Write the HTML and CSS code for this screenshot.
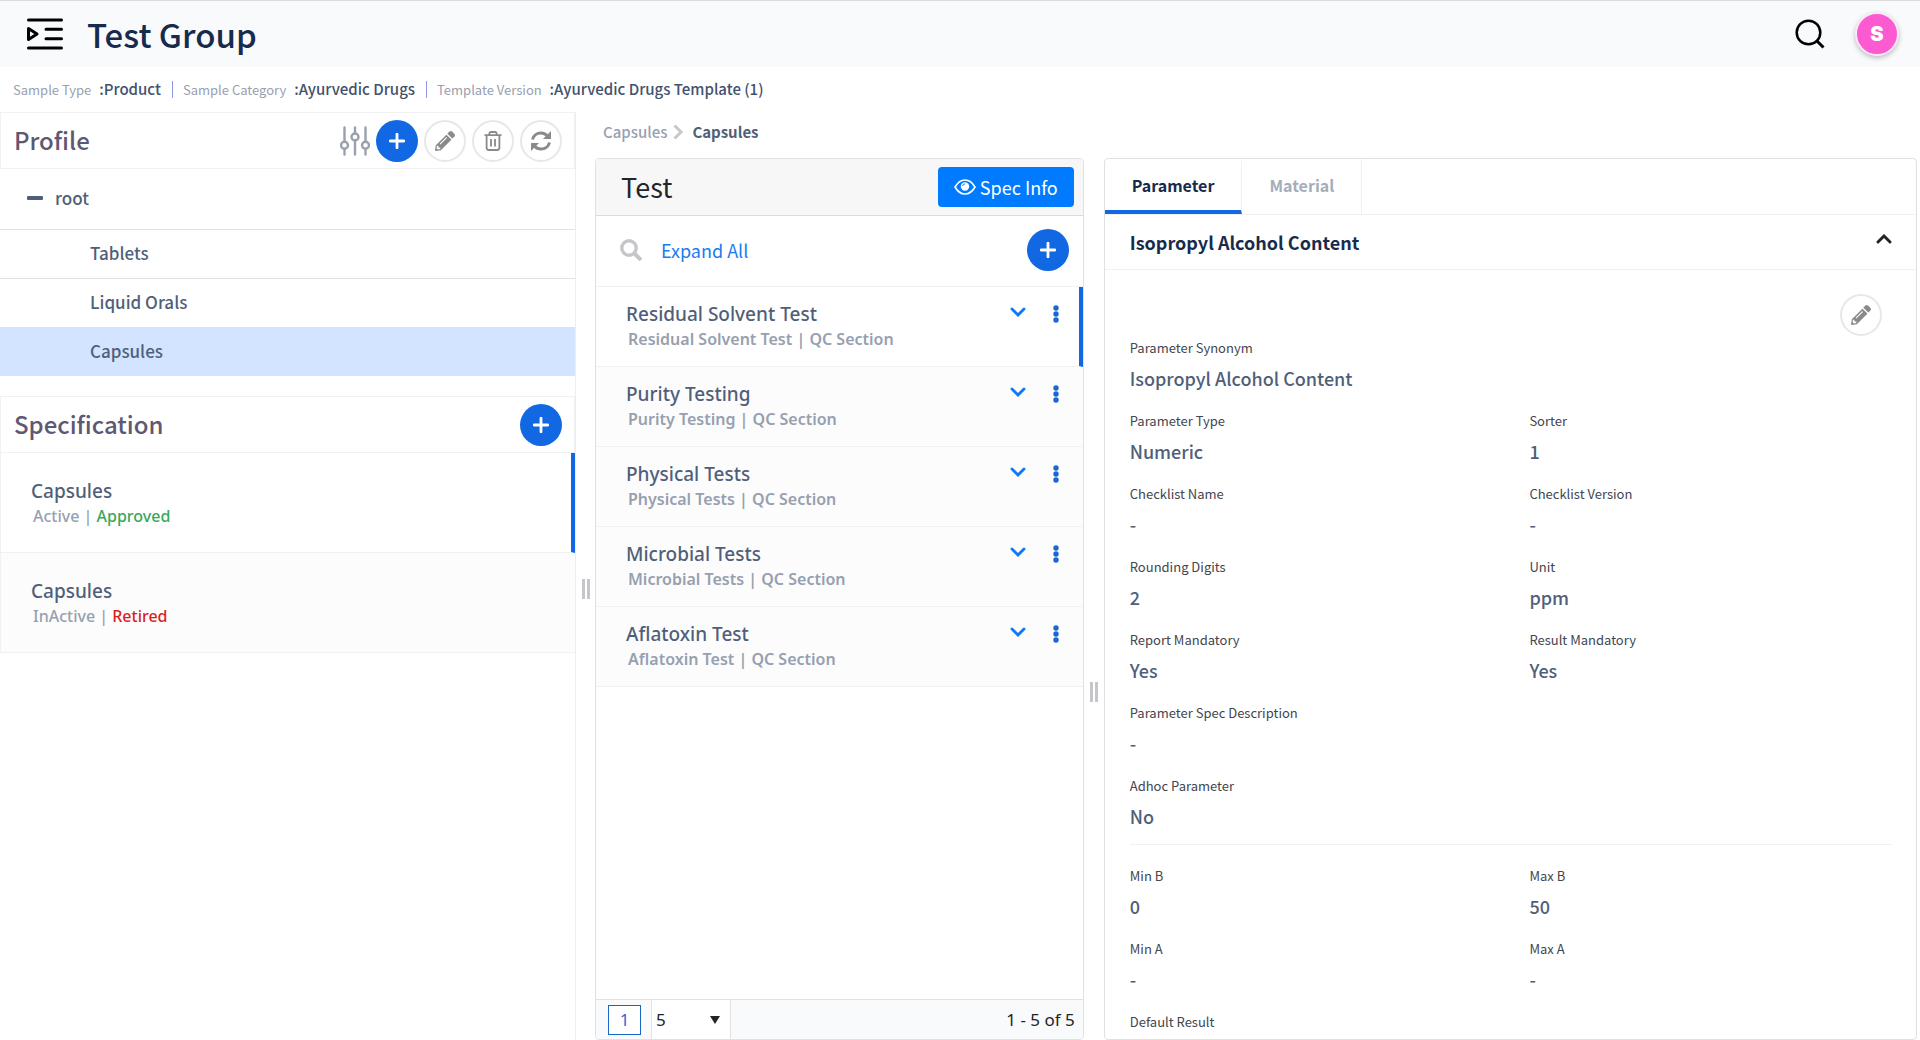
FILE: index.html
```html
<!DOCTYPE html>
<html lang="en">
<head>
<meta charset="utf-8">
<title>Test Group</title>
<link rel="stylesheet" href="styles.css">
</head>
<body>
<svg class="defs" aria-hidden="true">
  <symbol id="i-plus" viewBox="0 0 16 16"><path d="M8 1.200v13.600M1.200 8h13.600" stroke="currentColor" stroke-width="2.800" stroke-linecap="round"/></symbol>
  <symbol id="i-pencil" viewBox="0 0 512 512"><path fill="currentColor" d="M497.900 142.100l-46.100 46.100c-4.700 4.700-12.300 4.700-17 0l-111-111c-4.700-4.700-4.700-12.300 0-17l46.100-46.100c18.700-18.700 49.100-18.700 67.900 0l60.100 60.100c18.800 18.700 18.800 49.100 0 67.900zM284.200 99.800L21.600 362.400.4 483.900c-2.900 16.400 11.400 30.600 27.800 27.800l121.500-21.300 262.600-262.600c4.700-4.700 4.700-12.300 0-17l-111-111c-4.800-4.700-12.400-4.700-17.100 0zM124.100 339.900c-5.500-5.500-5.500-14.300 0-19.800l154-154c5.500-5.500 14.300-5.500 19.800 0s5.500 14.300 0 19.800l-154 154c-5.500 5.500-14.300 5.500-19.800 0zM88 424h48v36.300l-64.500 11.300-31.100-31.100L51.700 376H88v48z"/></symbol>
  <symbol id="i-down" viewBox="0 0 16 10"><path d="M2 2l6 6 6-6" fill="none" stroke="currentColor" stroke-width="2.900" stroke-linecap="round"/></symbol>
  <symbol id="i-dots" viewBox="0 0 6 18"><g fill="currentColor"><circle cx="3" cy="3" r="2.700"/><circle cx="3" cy="9" r="2.700"/><circle cx="3" cy="15" r="2.700"/></g></symbol>
</svg>

<header class="topbar">
  <button class="plain" aria-label="Open menu">
    <svg width="38" height="34" viewBox="0 0 38 34" fill="none" stroke="#000" stroke-width="3" stroke-linecap="round"><path d="M2.500 3h33M20 12.300h15.500M20 21.700h15.500M2.500 31h33"/><path d="M2.500 11.500v11l8.500-5.500z" stroke-linejoin="round"/></svg>
  </button>
  <h1 class="title">Test Group</h1>
  <button class="plain search" aria-label="Search">
    <svg width="30" height="30" viewBox="0 0 30 30" fill="none" stroke="#000" stroke-width="2.500"><circle cx="13.500" cy="13.500" r="11.800"/><path d="M21.500 21.500l7 7" stroke-width="3"/></svg>
  </button>
  <button class="avatar" aria-label="Account">S</button>
</header>

<div class="info">
  <span>Sample Type <b>:Product</b></span>
  <span>Sample Category <b>:Ayurvedic Drugs</b></span>
  <span>Template Version <b>:Ayurvedic Drugs Template (1)</b></span>
</div>

<main class="layout">
  <aside class="side">
    <div class="panel-head">
      <h2>Profile</h2>
      <button class="plain" aria-label="Filter">
        <svg width="30" height="30" viewBox="0 0 30 30" fill="none" stroke="#9aa0ad" stroke-width="2.400" stroke-linecap="round"><path d="M4.500 1.500v14M4.500 23v5.500M15 1.500v5M15 14v14.500M25.500 1.500v14M25.500 23v5.500"/><circle cx="4.500" cy="19.200" r="3.500"/><circle cx="15" cy="11" r="3.500"/><circle cx="25.500" cy="19.200" r="3.500"/></svg>
      </button>
      <button class="round primary" aria-label="Add profile"><svg width="16" height="16"><use href="#i-plus"/></svg></button>
      <button class="round" aria-label="Edit profile"><svg width="20" height="20"><use href="#i-pencil"/></svg></button>
      <button class="round" aria-label="Delete profile">
        <svg width="18" height="20" viewBox="0 0 18 20" fill="none" stroke="currentColor" stroke-width="1.800"><path d="M.5 4.200h17M5.300 4V2.600Q5.600 1 7 1h4q1.400 0 1.700 1.600V4M2.600 4.200v12.600q0 2.200 2.200 2.200h8.400q2.200 0 2.200-2.200V4.200M7 8v7.500M11 8v7.500"/></svg>
      </button>
      <button class="round" aria-label="Refresh profiles">
        <svg width="20" height="20" viewBox="0 0 20 20" fill="none" stroke="currentColor" stroke-width="3"><path d="M1.500 8.500C2.500 4.500 6 2 10 2c3 0 5 1.200 6.700 3.300M18.500 11.500c-1 4-4.500 6.500-8.500 6.500-3 0-5-1.200-6.700-3.300"/><path d="M20 0v8h-8zM0 20v-8h8z" fill="currentColor" stroke="none"/></svg>
      </button>
    </div>
    <ul class="tree">
      <li><button class="node root"><i class="minus"></i>root</button></li>
      <li><button class="node">Tablets</button></li>
      <li><button class="node">Liquid Orals</button></li>
      <li><button class="node selected">Capsules</button></li>
    </ul>
    <div class="panel-head">
      <h2>Specification</h2>
      <button class="round primary" aria-label="Add specification"><svg width="16" height="16"><use href="#i-plus"/></svg></button>
    </div>
    <ul class="specs">
      <li class="spec active"><a href="#">Capsules</a><p>Active | <span class="ok">Approved</span></p></li>
      <li class="spec"><a href="#">Capsules</a><p>InActive | <span class="bad">Retired</span></p></li>
    </ul>
  </aside>
  <div class="splitter first"><i></i></div>

  <section class="work">
    <nav class="crumbs" aria-label="Breadcrumb">
      <a href="#">Capsules</a>
      <svg width="11" height="16" viewBox="0 0 11 16" fill="none" stroke="#c6c8cc" stroke-width="3"><path d="M1.500 1.500L8 8l-6.500 6.500"/></svg>
      <b>Capsules</b>
    </nav>
    <div class="panes">
      <section class="card">
        <div class="card-head">
          <h2>Test</h2>
          <button class="spec-info">
            <svg width="22" height="16" viewBox="0 0 22 16" fill="none" stroke="#fff" stroke-width="1.600"><path d="M1 8Q5 1 11 1t10 7q-4 7-10 7T1 8z"/><circle cx="11" cy="7.500" r="4.200" fill="#fff" stroke="none"/><path d="M8.600 7q.2-2 2.400-2.200" stroke="#007bff" stroke-width="1"/></svg>
            Spec Info
          </button>
        </div>
        <div class="tools">
          <button class="plain" aria-label="Search tests"><svg width="22" height="22" viewBox="0 0 22 22" fill="none" stroke="#c5c6cc" stroke-width="3.400"><circle cx="9" cy="9" r="7.200"/><path d="M14 14l7 7" stroke-width="4"/></svg></button>
          <a href="#">Expand All</a>
          <button class="round primary" aria-label="Add test"><svg width="16" height="16"><use href="#i-plus"/></svg></button>
        </div>
        <ul class="tests">
          <li class="test active"><div><a href="#">Residual Solvent Test</a><p>Residual Solvent Test | QC Section</p></div><button class="plain" aria-label="Expand"><svg width="16" height="10"><use href="#i-down"/></svg></button><button class="plain" aria-label="More"><svg class="dots" width="6" height="18"><use href="#i-dots"/></svg></button></li>
          <li class="test"><div><a href="#">Purity Testing</a><p>Purity Testing | QC Section</p></div><button class="plain" aria-label="Expand"><svg width="16" height="10"><use href="#i-down"/></svg></button><button class="plain" aria-label="More"><svg class="dots" width="6" height="18"><use href="#i-dots"/></svg></button></li>
          <li class="test"><div><a href="#">Physical Tests</a><p>Physical Tests | QC Section</p></div><button class="plain" aria-label="Expand"><svg width="16" height="10"><use href="#i-down"/></svg></button><button class="plain" aria-label="More"><svg class="dots" width="6" height="18"><use href="#i-dots"/></svg></button></li>
          <li class="test"><div><a href="#">Microbial Tests</a><p>Microbial Tests | QC Section</p></div><button class="plain" aria-label="Expand"><svg width="16" height="10"><use href="#i-down"/></svg></button><button class="plain" aria-label="More"><svg class="dots" width="6" height="18"><use href="#i-dots"/></svg></button></li>
          <li class="test"><div><a href="#">Aflatoxin Test</a><p>Aflatoxin Test | QC Section</p></div><button class="plain" aria-label="Expand"><svg width="16" height="10"><use href="#i-down"/></svg></button><button class="plain" aria-label="More"><svg class="dots" width="6" height="18"><use href="#i-dots"/></svg></button></li>
        </ul>
        <div class="pager">
          <button class="page">1</button>
          <div class="size"><select aria-label="Rows per page"><option>5</option></select></div>
          <span>1 - 5 of 5</span>
        </div>
      </section>
      <div class="splitter second"><i></i></div>
      <section class="card detail">
        <div class="tabs" role="tablist">
          <button class="tab current" role="tab" aria-selected="true">Parameter</button>
          <button class="tab" role="tab" aria-selected="false">Material</button>
        </div>
        <div class="accordion">
          <h3>Isopropyl Alcohol Content</h3>
          <button class="plain" aria-label="Collapse"><svg class="up" width="16" height="10"><use href="#i-down"/></svg></button>
        </div>
        <div class="body">
          <button class="round edit" aria-label="Edit parameter"><svg width="20" height="20"><use href="#i-pencil"/></svg></button>
          <dl class="fields">
            <div class="wide"><dt>Parameter Synonym</dt><dd>Isopropyl Alcohol Content</dd></div>
            <div><dt>Parameter Type</dt><dd>Numeric</dd></div>
            <div><dt>Sorter</dt><dd>1</dd></div>
            <div><dt>Checklist Name</dt><dd>-</dd></div>
            <div><dt>Checklist Version</dt><dd>-</dd></div>
            <div><dt>Rounding Digits</dt><dd>2</dd></div>
            <div><dt>Unit</dt><dd>ppm</dd></div>
            <div><dt>Report Mandatory</dt><dd>Yes</dd></div>
            <div><dt>Result Mandatory</dt><dd>Yes</dd></div>
            <div class="wide"><dt>Parameter Spec Description</dt><dd>-</dd></div>
            <div class="wide"><dt>Adhoc Parameter</dt><dd>No</dd></div>
          </dl>
          <dl class="fields limits">
            <div><dt>Min B</dt><dd>0</dd></div>
            <div><dt>Max B</dt><dd>50</dd></div>
            <div><dt>Min A</dt><dd>-</dd></div>
            <div><dt>Max A</dt><dd>-</dd></div>
            <div class="wide"><dt>Default Result</dt></div>
          </dl>
        </div>
      </section>
    </div>
  </section>
</main>
</body>
</html>
```
FILE: styles.css
```css
* { box-sizing: border-box; margin: 0; padding: 0; }

body {
  display: flex;
  flex-direction: column;
  height: 100vh;
  overflow: hidden;
  background: #fff;
  color: #505f79;
  font-family: "Noto Sans CJK SC", "Noto Sans", sans-serif;
  font-size: 17px;
  line-height: 24px;
}

ul { list-style: none; }
a { color: inherit; text-decoration: none; }
button, select { font: inherit; color: inherit; cursor: pointer; }
svg { display: block; }
.defs { position: absolute; width: 0; height: 0; }
.plain { border: 0; background: none; }

/* Top bar */
.topbar {
  display: flex;
  flex: none;
  align-items: center;
  height: 67px;
  padding: 0 21px 1px 26px;
  border-top: 1px solid #d9dbdf;
  background: #f9fafc;
}
.title {
  margin-left: 23px;
  color: #172b4d;
  font-size: 33px;
  font-weight: 500;
  line-height: 48px;
}
.search { margin-left: auto; }
.avatar {
  width: 44px;
  height: 44px;
  margin-left: 30px;
  border: 2px solid #fbe9f8;
  border-radius: 50%;
  background: #fc5ad0;
  box-shadow: 0 2px 5px rgba(0, 0, 0, 0.25);
  color: #fff;
  font: 900 20px Inter, sans-serif;
}

/* Current selection summary */
.info {
  display: flex;
  flex: none;
  align-items: center;
  height: 45px;
  padding: 0 13px;
  color: #97a0af;
  font-size: 13px;
  line-height: 16px;
}
.info span + span {
  margin-left: 11px;
  padding-left: 10px;
  border-left: 1px solid #8f95e0;
}
.info b { margin-left: 5px; color: #42526e; font-size: 15px; font-weight: 500; }

/* Columns */
.layout { display: flex; flex: 1; min-height: 0; }
.side { flex: none; width: 30%; border-right: 1px solid #eceef0; }
.splitter {
  display: flex;
  flex: none;
  justify-content: center;
  width: 20px;
}
.splitter i {
  width: 8px;
  height: 20px;
  border: solid #c4c6cc;
  border-width: 0 3px;
}
.splitter.first { align-items: center; width: 19px; padding-top: 26px; }
.splitter.second { padding-top: 524px; }

.round {
  display: flex;
  flex: none;
  align-items: center;
  justify-content: center;
  width: 42px;
  height: 42px;
  border: 2px solid #e6e7e9;
  border-radius: 50%;
  background: #fff;
  color: #8a8a8a;
}
.primary { border: 0; background: #1268e3; color: #fff; }

/* Left column */
.panel-head {
  display: flex;
  align-items: center;
  gap: 6px;
  height: 57px;
  padding: 0 12px 0 13px;
  border: 1px solid #eff1f3;
}
.panel-head h2 {
  margin-right: auto;
  padding-bottom: 2px;
  color: #5e5873;
  font-size: 24px;
  font-weight: 500;
  line-height: 32px;
}
.tree { margin-bottom: 20px; }
.tree li + li { border-top: 1px solid #e0e3e6; }
.node {
  display: flex;
  align-items: center;
  width: 100%;
  height: 48px;
  padding: 0 0 2px 90px;
  border: 0;
  background: #fff;
  font-weight: 500;
}
.root { gap: 12px; height: 60px; padding-left: 27px; }
.minus { width: 16px; height: 4px; border-radius: 1px; background: #505f79; }
.selected { background: #d2e4ff; }

.spec, .test { font-family: "Noto Sans", sans-serif; font-weight: 500; }
.spec {
  height: 100px;
  padding: 26px 30px;
  border: solid #eff1f3;
  border-width: 0 0 1px 1px;
  background: #fcfcfd;
}
.spec a, .test a { font-size: 19px; line-height: 24px; }
.spec p, .test p {
  padding-left: 2px;
  color: #97a0af;
  font-size: 16px;
  font-weight: 600;
  line-height: 24px;
}
.spec p { font-weight: 500; }
.spec.active { border-right: 4px solid #1268e3; background: #fff; }
.ok { color: #36a95b; }
.bad { color: #de1e1e; }

/* Right side */
.work { display: flex; flex: 1; flex-direction: column; min-width: 0; padding-right: 3px; }
.crumbs {
  display: flex;
  flex: none;
  align-items: center;
  gap: 8px;
  height: 46px;
  padding: 0 8px 6px;
  font-size: 15px;
}
.crumbs a { color: #97a0af; font-weight: 500; }
.crumbs svg { margin-left: -2px; }
.panes { display: flex; flex: 1; min-height: 0; }
.card {
  display: flex;
  flex: 3 1 0;
  flex-direction: column;
  min-width: 0;
  overflow: hidden;
  border: 1px solid #dfe1e4;
  border-radius: 4px;
}
.detail { flex-grow: 5; }

.card-head {
  display: flex;
  flex: none;
  align-items: center;
  justify-content: space-between;
  height: 57px;
  padding: 0 9px 0 25px;
  border-bottom: 1px solid #d9dbde;
  background: #f7f7f7;
}
.card-head h2 { color: #212529; font-size: 27px; font-weight: 400; line-height: 40px; }
.spec-info {
  display: flex;
  align-items: center;
  gap: 4px;
  height: 40px;
  padding: 0 16px;
  border: 0;
  border-radius: 4px;
  background: #007bff;
  color: #fff;
  font-size: 18px;
}
.tools {
  display: flex;
  flex: none;
  align-items: center;
  gap: 19px;
  height: 71px;
  padding: 0 14px 3px 24px;
  border-bottom: 1px solid #eff1f3;
}
.tools a { margin-right: auto; color: #1a7cf0; font-size: 18px; }
.test {
  display: flex;
  align-items: flex-start;
  height: 80px;
  padding: 15px 24px 0 30px;
  border-bottom: 1px solid #eff1f3;
  background: #fcfcfd;
}
.test div { margin-right: auto; }
.test .plain { margin-left: 27px; padding-top: 5px; color: #0f7bf0; }
.test .plain + .plain { padding-top: 3px; }
.test .dots { color: #1a66d6; }
.test.active { padding-right: 20px; border-right: 4px solid #1268e3; background: #fff; }

.pager {
  display: flex;
  flex: none;
  align-items: center;
  height: 40px;
  margin-top: auto;
  padding: 0 8px 0 12px;
  border-top: 1px solid #dfe3e5;
  background: #f8fafb;
  color: #212529;
  font-family: "Noto Sans", sans-serif;
}
.page { width: 33px; height: 30px; border: 1px solid #1a66c8; background: #fff; color: #3a62d8; }
.size {
  display: flex;
  align-items: center;
  align-self: stretch;
  width: 80px;
  margin-left: 10px;
  border: solid #dfe3e5;
  border-width: 0 1px;
  background: #fff;
}
.size::after {
  margin-right: 10px;
  border: solid transparent;
  border-width: 8px 5px 0;
  border-top-color: #212529;
  content: "";
}
.size select { flex: 1; height: 38px; padding-left: 4px; border: 0; background: none; appearance: none; }
.pager span { margin-left: auto; }

/* Parameter details */
.tabs { display: flex; flex: none; height: 56px; border-bottom: 1px solid #eff1f3; }
.tab {
  padding: 0 27px 3px;
  border: 0;
  border-right: 1px solid #eff1f3;
  background: none;
  color: #a5adba;
  font-size: 16px;
  font-weight: 700;
}
.current { border-top: 4px solid transparent; border-bottom: 4px solid #1268e3; color: #172b4d; }
.accordion {
  display: flex;
  flex: none;
  align-items: center;
  justify-content: space-between;
  height: 55px;
  padding: 0 24px 0 25px;
  border-bottom: 1px solid #eff1f3;
}
.accordion h3 { color: #172b4d; font-size: 18px; font-weight: 700; }
.accordion .plain { padding-bottom: 6px; }
.up { color: #212529; transform: rotate(180deg); }
.body { flex: 1; min-height: 0; padding: 24px 25px 0; overflow: hidden; }
.edit { margin: 0 9px 0 auto; }
.fields {
  display: grid;
  grid-template-columns: 1fr 1fr;
  gap: 13px 38px;
}
.wide { grid-column: 1 / -1; }
dt { color: #42464e; font-size: 13px; line-height: 24px; }
dd { font-size: 18px; font-weight: 500; line-height: 36px; }
.limits { margin-top: 10px; padding-top: 19px; border-top: 1px solid #eff1f3; }
```
